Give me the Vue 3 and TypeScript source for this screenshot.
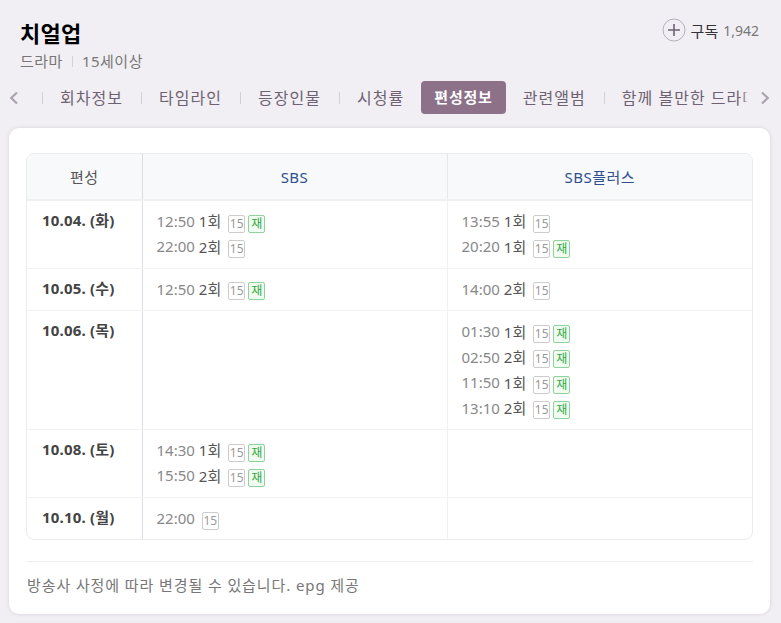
<script setup lang="ts">
interface Slot { time: string; ep?: string; re?: boolean }
interface Row { date: string; a: Slot[]; b: Slot[] }
const tabs = ['회차정보', '타임라인', '등장인물', '시청률', '편성정보', '관련앨범', '함께 볼만한 드라마']
const activeTab = '편성정보'
const rows: Row[] = [
  { date: '10.04. (화)', a: [{ time: '12:50', ep: '1회', re: true }, { time: '22:00', ep: '2회' }], b: [{ time: '13:55', ep: '1회' }, { time: '20:20', ep: '1회', re: true }] },
  { date: '10.05. (수)', a: [{ time: '12:50', ep: '2회', re: true }], b: [{ time: '14:00', ep: '2회' }] },
  { date: '10.06. (목)', a: [], b: [{ time: '01:30', ep: '1회', re: true }, { time: '02:50', ep: '2회', re: true }, { time: '11:50', ep: '1회', re: true }, { time: '13:10', ep: '2회', re: true }] },
  { date: '10.08. (토)', a: [{ time: '14:30', ep: '1회', re: true }, { time: '15:50', ep: '2회', re: true }], b: [] },
  { date: '10.10. (월)', a: [{ time: '22:00' }], b: [] },
]
</script>

<template>
  <div class="page">
    <header class="head">
      <div>
        <h1 class="title">치얼업</h1>
        <p class="meta"><span>드라마</span><i class="meta-sep"></i><span>15세이상</span></p>
      </div>
      <div class="sub">
        <svg class="plus" width="24" height="24" viewBox="0 0 24 24">
          <circle cx="12" cy="12" r="11" fill="none" stroke="#b9aebd" />
          <path d="M12 6v12M6 12h12" stroke="#6f6272" stroke-width="1.6" fill="none" />
        </svg>
        <span class="sub-label">구독</span>
        <span class="sub-count">1,942</span>
      </div>
    </header>

    <nav class="tabs">
      <svg class="arrow" width="10" height="14" viewBox="0 0 10 14"><path d="M8 1.5 2.2 7 8 12.500" fill="none" stroke="#aaa3ad" stroke-width="2.2" /></svg>
      <div class="tab-clip">
        <ul class="tab-list">
          <li v-for="t in tabs" :key="t" class="tab" :class="{ active: t === activeTab }">{{ t }}</li>
        </ul>
      </div>
      <svg class="arrow" width="10" height="14" viewBox="0 0 10 14"><path d="M2 1.500 7.800 7 2 12.500" fill="none" stroke="#aaa3ad" stroke-width="2.2" /></svg>
    </nav>

    <section class="card">
      <div class="table-wrap">
        <table class="tbl">
          <colgroup><col class="c1" /><col class="c2" /><col class="c3" /></colgroup>
          <thead>
            <tr><th>편성</th><th class="ch">SBS</th><th class="ch">SBS플러스</th></tr>
          </thead>
          <tbody>
            <tr v-for="r in rows" :key="r.date">
              <td class="date">{{ r.date }}</td>
              <td v-for="(col, ci) in [r.a, r.b]" :key="ci" class="slots">
                <div v-for="(s, si) in col" :key="si" class="slot">
                  <span class="time">{{ s.time }}</span>
                  <span v-if="s.ep" class="ep">{{ s.ep }}</span>
                  <span class="badges">
                    <span class="badge">15</span>
                    <span v-if="s.re" class="badge re">재</span>
                  </span>
                </div>
              </td>
            </tr>
          </tbody>
        </table>
      </div>
      <p class="note">방송사 사정에 따라 변경될 수 있습니다. epg 제공</p>
    </section>
  </div>
</template>

<style>
html, body { margin: 0; background: #f1eff3; }
</style>

<style scoped>
.page {
  width: 781px;
  height: 623px;
  box-sizing: border-box;
  overflow: hidden;
  background: #f1eff3;
  font-family: "Noto Sans", "Noto Sans CJK KR", sans-serif;
  color: #333;
}
.head {
  display: flex;
  justify-content: space-between;
  padding: 19px 22px 0 20px;
}
.title {
  margin: 0;
  font-size: 22px;
  line-height: 28px;
  font-weight: 700;
  letter-spacing: 0.3px;
  color: #000;
}
.meta {
  margin: 4px 0 0;
  display: flex;
  align-items: center;
  font-size: 15px;
  line-height: 20px;
  letter-spacing: 0.5px;
  color: #777;
}
.meta-sep { width: 1px; height: 11px; background: #d5d2d7; margin: 0 9px 0 9px; }
.sub { display: flex; align-items: center; height: 24px; margin-top: -1px; font-size: 14px; }
.plus { margin-right: 5px; }
.sub-label { color: #333; margin-right: 5px; font-size: 15px; }
.sub-count { color: #777; }
.tabs {
  display: flex;
  align-items: center;
  height: 33px;
  margin-top: 10px;
}
.arrow { flex: none; margin: 0 23px 0 9px; }
.arrow:last-child { margin: 0 0 0 12px; }
.tab-clip { position: relative; width: 706px; overflow: hidden; flex: none; }
.tab-clip::after {
  content: "";
  position: absolute;
  top: 0;
  right: 0;
  bottom: 0;
  width: 5px;
  background: linear-gradient(90deg, rgba(241, 239, 243, 0), #f1eff3);
}
.tab-list {
  list-style: none;
  margin: 0;
  padding: 0;
  display: flex;
  align-items: center;
  white-space: nowrap;
}
.tab {
  position: relative;
  padding: 1px 18px 0;
  height: 33px;
  line-height: 33px;
  font-size: 16px;
  letter-spacing: 1.03px;
  color: #6e6272;
  box-sizing: border-box;
}
.tab::before {
  content: "";
  position: absolute;
  left: 0;
  top: 11px;
  width: 1px;
  height: 12px;
  background: #d2ced4;
}
.tab.active {
  padding: 0 13px;
  margin-left: -1px;
  background: #8c7189;
  color: #fff;
  font-size: 15px;
  font-weight: 700;
  border-radius: 4px;
  letter-spacing: 0.8px;
}
.tab.active::before, .tab.active + .tab::before { display: none; }
.tab.active + .tab { padding-left: 17px; }
.card {
  width: 761px;
  height: 486px;
  box-sizing: border-box;
  margin: 14px 0 0 9px;
  padding: 25px 17px 0;
  background: #fff;
  border-radius: 10px;
  box-shadow: 0 0 4px rgba(0, 0, 0, 0.12);
}
.table-wrap {
  border: 1px solid #e9ebee;
  border-radius: 8px;
  overflow: hidden;
}
.tbl { width: 100%; border-collapse: collapse; table-layout: fixed; }
.c1 { width: 115px; }
.c2 { width: 305px; }
th {
  height: 45px;
  padding: 0;
  background: #f8f9fa;
  border-bottom: 2px solid #eef0f2;
  font-size: 15px;
  font-weight: 400;
  color: #555;
  letter-spacing: 0.5px;
}
th + th { border-left: 1px solid #e6e8eb; }
th:nth-child(2) { border-left-color: #d9dce0; }
.ch { color: #2f4f8f; }
td {
  padding: 7px 14px 8.9px;
  vertical-align: top;
  border-bottom: 1px solid #f1f2f4;
}
tr:last-child td { border-bottom: 0; }
td + td { border-left: 1px solid #f0f1f3; }
td:nth-child(2) { border-left-color: #dcdfe3; }
.date {
  padding-left: 15px;
  padding-right: 0;
  font-size: 15px;
  line-height: 25.5px;
  font-weight: 700;
  letter-spacing: 0.2px;
  color: #444;
}
.slot {
  display: flex;
  align-items: center;
  height: 25.5px;
  font-size: 15px;
}
.time { color: #888; }
.ep { color: #555; margin-left: 4px; }
.badges { display: flex; gap: 3px; align-self: flex-start; margin: 6.5px 0 0 7px; }
.badge {
  width: 17px;
  height: 18px;
  box-sizing: border-box;
  border: 1px solid #ccc;
  border-radius: 2px;
  font-size: 12px;
  line-height: 16px;
  text-align: center;
  color: #999;
}
.badge.re { border-color: #8fd39a; background: #f0fbf1; color: #2fa83f; }
.note {
  margin: 21px 0 0;
  padding: 13px 0 0 1px;
  border-top: 1px solid #eeeeef;
  font-size: 15px;
  line-height: 20px;
  letter-spacing: 0.9px;
  color: #777;
}
</style>
